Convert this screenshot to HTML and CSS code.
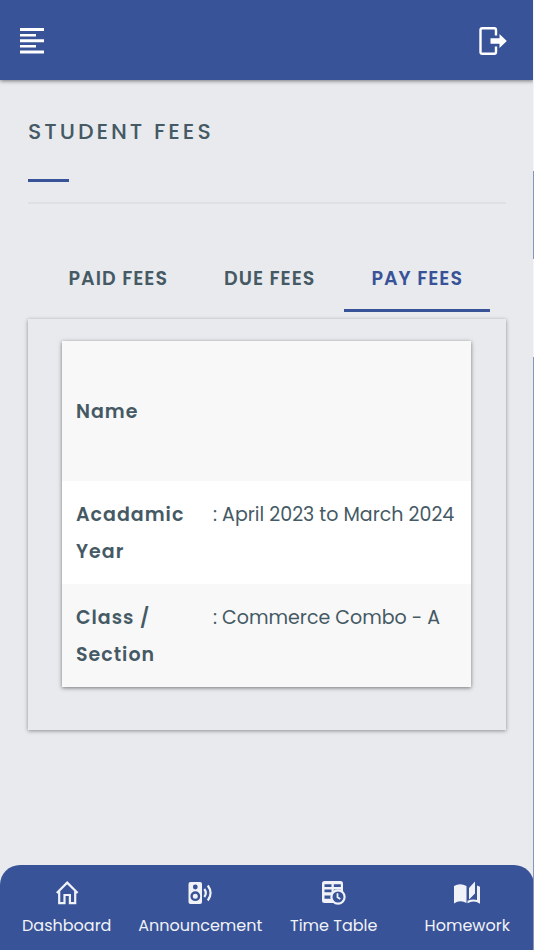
FILE: index.html
```html
<!DOCTYPE html>
<html lang="en">
<head>
<meta charset="utf-8">
<meta name="viewport" content="width=device-width, initial-scale=1">
<title>Student Fees</title>
<link rel="stylesheet" href="styles.css">
</head>
<body>
<header class="topbar">
  <button class="icon-button" type="button" aria-label="Menu">
    <svg width="24" height="26" viewBox="0 0 24 26" fill="currentColor"><path d="M0 0h24v3H0zM0 6h16v2.500H0zM0 11.300h24v3H0zM0 17h16v2.500H0zM0 22.500h24v3H0z"/></svg>
  </button>
  <button class="icon-button" type="button" aria-label="Log out">
    <svg width="28" height="28" viewBox="0 0 28 28"><path d="M17 8.500V3q0-1.800-1.800-1.800H3.300Q1.500 1.200 1.500 3v22q0 1.800 1.800 1.800h11.900q1.800 0 1.800-1.800v-5.500" fill="none" stroke="currentColor" stroke-width="2.400"/><path d="M11.500 11.300h9V7l7.300 7-7.300 7v-4.300h-9z" fill="currentColor"/></svg>
  </button>
</header>
<main class="content">
  <h1 class="title">STUDENT FEES</h1>
  <div class="tabs" role="tablist">
    <button class="tab" type="button" role="tab">PAID FEES</button>
    <button class="tab" type="button" role="tab">DUE FEES</button>
    <button class="tab tab-active" type="button" role="tab" aria-selected="true">PAY FEES</button>
  </div>
  <section class="panel">
    <table class="details">
      <tbody>
        <tr class="name-row"><th scope="row">Name</th><td></td></tr>
        <tr><th scope="row">Acadamic Year</th><td>: April 2023 to March 2024</td></tr>
        <tr><th scope="row">Class / Section</th><td>: Commerce Combo - A</td></tr>
      </tbody>
    </table>
  </section>
</main>
<nav class="bottom-nav">
  <a class="nav-item" href="#">
    <svg width="26" height="26" viewBox="0 0 26 26" fill="none" stroke="currentColor" stroke-width="2.200"><path d="M2.800 13 13.200 2.600 23.600 13M5.200 11v12.200h5.300V15h5.400v8.200h5.300V11"/></svg>
    <span>Dashboard</span>
  </a>
  <a class="nav-item" href="#">
    <svg width="26" height="26" viewBox="0 0 26 26"><path fill="currentColor" fill-rule="evenodd" d="M3.500 2H13q2 0 2 2v18q0 2-2 2H3.500q-2 0-2-2V4q0-2 2-2zm4.800 2.600a2.400 2.400 0 1 0 0 4.800 2.400 2.400 0 0 0 0-4.800zm0 6.700a4.900 4.900 0 1 0 0 9.800 4.900 4.900 0 0 0 0-9.800zm0 2.400a2.500 2.500 0 1 1 0 5 2.500 2.500 0 0 1 0-5z"/><path d="M17.300 9q3 4 0 8M20.800 5.500q5.500 7.500 0 15" fill="none" stroke="currentColor" stroke-width="2.200"/></svg>
    <span>Announcement</span>
  </a>
  <a class="nav-item" href="#">
    <svg width="26" height="26" viewBox="0 0 26 26"><rect x="1" y="1" width="21" height="22" rx="2.500" fill="currentColor"/><path class="cutout" d="M3.500 4.300h7v2.700h-7zM12.800 4.300h7v2.700h-7zM3.500 9.600h7v2.700h-7zM12.800 9.600h7v2.700h-7zM3.500 15.500h7v3.200h-7z"/><circle class="cutout" cx="17" cy="17" r="6.600" stroke="currentColor" stroke-width="2.200"/><path d="M16.500 13.300v4l2.800 1.800" fill="none" stroke="currentColor" stroke-width="1.800"/></svg>
    <span>Time Table</span>
  </a>
  <a class="nav-item" href="#">
    <svg width="26" height="26" viewBox="0 0 26 26" fill="currentColor"><path d="M0 6q6-3.500 12.500 0v17Q6 19.500 0 23.500zM15 8l6-6.500v12L15 19.500zM23 5.500l3 1.200v17q-6-4-12.500-.500V20.800q5-2 9.500-.800z"/></svg>
    <span>Homework</span>
  </a>
</nav>
</body>
</html>
```
FILE: styles.css
```css
* { box-sizing: border-box; }

body {
  position: relative;
  display: flex;
  flex-direction: column;
  min-height: 100vh;
  margin: 0;
  background: #e9eaee;
  color: #455a64;
  font-family: Poppins, Inter, sans-serif;
  font-size: 19px;
}

/* Thin marker down the right edge of the page */
body::after {
  content: "";
  position: absolute;
  top: 0;
  right: 0;
  bottom: 0;
  width: 1px;
  background: linear-gradient(#f3f4f9 18%, #8795ba 18% 27.3%, #f3f4f9 27.3% 37.6%, #8795ba 37.6%);
}

button { font: inherit; color: inherit; background: none; border: 0; padding: 0; }

svg { display: block; }

.topbar {
  display: flex;
  align-items: center;
  justify-content: space-between;
  height: 80px;
  padding: 2px 27px 0 20px;
  background: #385397;
  color: #fff;
  box-shadow: 0 1px 4px rgba(0, 0, 0, .5);
}

.content {
  flex: 1;
  padding: 32px 28px;
}

.title {
  position: relative;
  margin: 0;
  padding-bottom: 50px;
  border-bottom: 2px solid #e0e0e4;
  font-size: 22px;
  font-weight: 500;
  line-height: 40px;
  letter-spacing: 3px;
}

.title::after {
  content: "";
  position: absolute;
  left: 0;
  bottom: 20px;
  width: 41px;
  height: 3px;
  background: #385397;
}

.tabs {
  display: flex;
  justify-content: flex-end;
  gap: 2px;
  margin: 41px 16px 7px 0;
}

.tab {
  height: 67px;
  padding: 2px 27px 0;
  border-bottom: 3px solid transparent;
  font-weight: 600;
  letter-spacing: 1px;
}

.tab-active {
  border-bottom-color: #385397;
  color: #385397;
}

.panel {
  padding: 22px 35px 43px 34px;
  box-shadow: 0 1px 4px rgba(0, 0, 0, .4);
}

.details {
  width: 100%;
  table-layout: fixed;
  border-collapse: collapse;
  background: #fff;
  box-shadow: 0 1px 4px rgba(0, 0, 0, .5);
  line-height: 37px;
}

.details tr:nth-child(odd) { background: #f8f8f8; }

.details th,
.details td {
  padding: 15px 0 14px 14px;
  text-align: left;
  vertical-align: top;
}

.details th {
  width: 137px;
  font-weight: 600;
  letter-spacing: 1px;
}

.details td { white-space: nowrap; }

.details .name-row { height: 140px; }
.details .name-row th { vertical-align: middle; }

.bottom-nav {
  display: grid;
  grid-template-columns: repeat(4, 1fr);
  padding: 15px 0 12px;
  border-radius: 20px 20px 0 0;
  background: #385397;
  color: #f0f2f8;
}

.nav-item {
  display: flex;
  flex-direction: column;
  align-items: center;
  gap: 8px;
  color: inherit;
  font-size: 16px;
  line-height: 24px;
  text-decoration: none;
  white-space: nowrap;
}

.cutout { fill: #385397; }
```
